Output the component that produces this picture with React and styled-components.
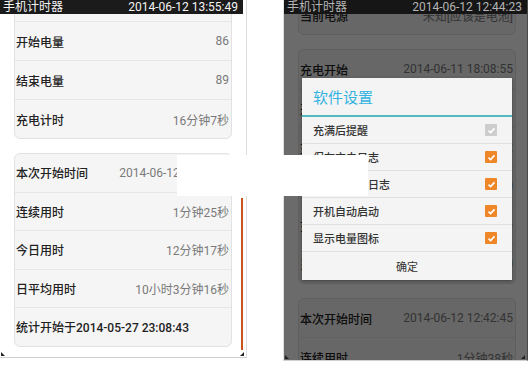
import React from "react";
import styled, { createGlobalStyle } from "styled-components";

const GlobalStyle = createGlobalStyle`
  html, body {
    margin: 0;
    padding: 0;
    background: #fff;
  }
  body {
    font-family: Roboto, "Noto Sans CJK SC", sans-serif;
  }
`;

const Page = styled.div`
  position: relative;
  display: flex;
  align-items: flex-start;
  width: 530px;
  height: 365px;
  overflow: hidden;
  background: #fff;
`;

const Phone = styled.div`
  position: relative;
  display: flex;
  flex-direction: column;
  flex: none;
  box-sizing: border-box;
  width: ${props => props.width}px;
  height: ${props => props.height}px;
  margin-left: ${props => props.offset || 0}px;
  border-left: ${props => (props.leftEdge ? `1px solid ${props.leftEdge}` : 0)};
  border-right: 1px solid ${props => props.rightEdge};
  border-bottom: 1px solid #cfcfcf;
  background: #fff;
`;

const StatusBar = styled.div`
  display: flex;
  justify-content: space-between;
  align-items: center;
  flex: none;
  height: 14px;
  margin-right: ${props => props.trim || 0}px;
  padding: 0 5px 0 3px;
  background: ${props => (props.dim ? "#161616" : "#1b1b1b")};
  color: ${props => (props.dim ? "#b4b4b4" : "#f4f4f4")};
  font-size: 12px;
  line-height: 14px;
  white-space: nowrap;
`;

const Screen = styled.div`
  position: relative;
  flex: 1;
  overflow: hidden;
  padding: ${props => (props.dim ? "0 11px 0 14px" : "0 14px")};
`;

const Scroller = styled.div`
  display: flex;
  flex-direction: column;
  gap: 14px;
  margin-top: ${props => props.shift}px;
`;

const Card = styled.div`
  background: #f5f5f5;
  border: 1px solid #e2e2e2;
  border-radius: 6px;
  overflow: hidden;
`;

const Row = styled.div`
  display: flex;
  align-items: center;
  justify-content: space-between;
  height: ${props => props.h}px;
  padding: 0 2px 0 1px;
  white-space: nowrap;

  & + & {
    border-top: 1px solid #e6e6e6;
  }
`;

const Label = styled.span`
  font-size: 12px;
  font-weight: 500;
  color: #222;
`;

const Value = styled.span`
  font-size: 12px;
  color: #7a7a7a;
`;

const Scrollbar = styled.div`
  position: absolute;
  right: 3px;
  top: 198px;
  width: 2px;
  height: 152px;
  background: #c9541d;
`;

const Corner = styled.div`
  position: absolute;
  bottom: 1px;
  ${props => (props.side === "left" ? "left: 1px;" : "right: 2px;")}
  width: 0;
  height: 0;
  border-bottom: 4px solid #222;
  ${props =>
    props.side === "left"
      ? "border-right: 4px solid transparent;"
      : "border-left: 4px solid transparent;"}
`;

const Dim = styled.div`
  position: absolute;
  inset: 0;
  background: rgba(0, 0, 0, 0.58);
`;

const Dialog = styled.div`
  position: absolute;
  top: 64px;
  left: 18px;
  display: flex;
  flex-direction: column;
  width: 210px;
  height: 202px;
  background: #f4f4f4;
  box-shadow: 0 1px 3px rgba(0, 0, 0, 0.4);
`;

const DialogTitle = styled.div`
  display: flex;
  align-items: center;
  height: 37px;
  padding-left: 11px;
  font-size: 15px;
  color: #33b2e0;
  border-bottom: 2px solid #55b9c3;
`;

const Option = styled.div`
  display: flex;
  align-items: center;
  justify-content: space-between;
  height: 26px;
  padding: 0 15px 0 11px;
  border-bottom: 1px solid #e0e0e0;
  font-size: 11px;
  font-weight: 500;
  color: #333;
`;

const Box = styled.span`
  display: flex;
  align-items: center;
  justify-content: center;
  width: 12px;
  height: 12px;
  border-radius: 1px;
  background: ${props => (props.off ? "#cdcdcd" : "#ef8729")};
`;

const DialogButton = styled.div`
  display: flex;
  align-items: center;
  justify-content: center;
  flex: 1;
  font-size: 11px;
  color: #333;
`;

const Patch = styled.div`
  position: absolute;
  left: 177px;
  top: 155px;
  width: 191px;
  height: 41px;
  background: #fff;
`;

const Check = ({ off }) => (
  <Box off={off}>
    <svg width="9" height="9" viewBox="0 0 9 9">
      <polyline
        points="1.5,4.6 3.6,6.6 7.5,2.4"
        fill="none"
        stroke="#fff"
        strokeWidth="1.6"
      />
    </svg>
  </Box>
);

const InfoCard = ({ rows, h = 38 }) => (
  <Card>
    {rows.map(([label, value], i) => (
      <Row key={i} h={h}>
        <Label>{label}</Label>
        {value && <Value>{value}</Value>}
      </Row>
    ))}
  </Card>
);

const chargeLeft = [
  ["充电开始", "2014-06-12 13:39:42"],
  ["开始电量", "86"],
  ["结束电量", "89"],
  ["充电计时", "16分钟7秒"],
];

const usageLeft = [
  ["本次开始时间", "2014-06-12 13:54:24"],
  ["连续用时", "1分钟25秒"],
  ["今日用时", "12分钟17秒"],
  ["日平均用时", "10小时3分钟16秒"],
  ["统计开始于2014-05-27 23:08:43"],
];

const powerRight = [
  ["当前电量", "89"],
  ["当前电源", "未知[应该是电池]"],
];

const chargeRight = [
  ["充电开始", "2014-06-11 18:08:55"],
  ["开始电量", "21"],
  ["充电结束", "2014-06-11 19:40:12"],
  ["结束电量", "100"],
  ["充电计时", "1小时31分钟17秒"],
  ["当前电量", "100"],
];

const usageRight = [
  ["本次开始时间", "2014-06-12 12:42:45"],
  ["连续用时", "1分钟38秒"],
  ["今日用时", "8分钟2秒"],
];

const options = [
  ["充满后提醒", true],
  ["保存充电日志", false],
  ["保存使用前日志", false],
  ["开机自动启动", false],
  ["显示电量图标", false],
];

export default function App() {
  return (
    <>
      <GlobalStyle />
      <Page>
        <Phone width={247} height={358} rightEdge="#dcdcdc">
          <StatusBar trim={3}>
            <span>手机计时器</span>
            <span>2014-06-12 13:55:49</span>
          </StatusBar>
          <Screen>
            <Scroller shift={-32}>
              <InfoCard rows={chargeLeft} />
              <InfoCard rows={usageLeft} h={37.5} />
            </Scroller>
          </Screen>
          <Scrollbar />
          <Corner side="left" />
          <Corner side="right" />
        </Phone>

        <Phone
          width={245}
          height={361}
          offset={36}
          leftEdge="#e2e2e2"
          rightEdge="#4a4a4a"
        >
          <StatusBar dim>
            <span>手机计时器</span>
            <span>2014-06-12 12:44:23</span>
          </StatusBar>
          <Screen dim>
            <Scroller shift={-58}>
              <InfoCard rows={powerRight} />
              <InfoCard rows={chargeRight} />
              <InfoCard rows={usageRight} />
            </Scroller>
            <Dim />
            <Dialog>
              <DialogTitle>软件设置</DialogTitle>
              {options.map(([label, off]) => (
                <Option key={label}>
                  <span>{label}</span>
                  <Check off={off} />
                </Option>
              ))}
              <DialogButton>确定</DialogButton>
            </Dialog>
          </Screen>
          <Corner side="left" />
          <Corner side="right" />
        </Phone>

        <Patch />
      </Page>
    </>
  );
}
